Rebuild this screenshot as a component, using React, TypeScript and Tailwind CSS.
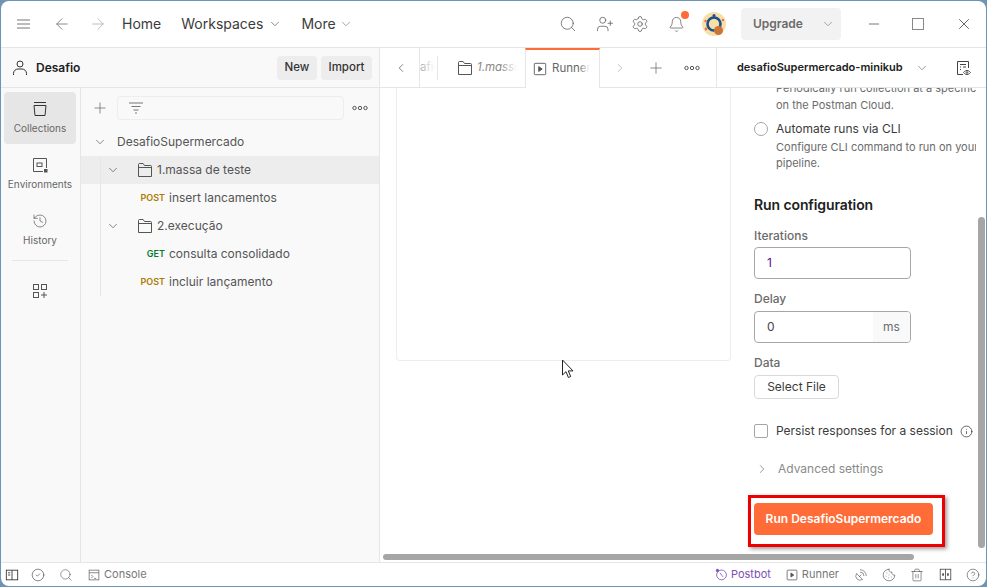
import React from "react";
import { Search, UserPlus, Settings, Bell, ChevronDown, ChevronRight, ChevronLeft, Plus, ArrowLeft, ArrowRight, X, Minus, Info, History, CircleCheck, Trash2, Cookie, CircleHelp, SatelliteDish } from "lucide-react";

const font = { fontFamily: "Inter, 'Liberation Sans', sans-serif" };

function Svg({ size = 16, children, className = "" }: { size?: number; children: React.ReactNode; className?: string }) {
  return (
    <svg width={size} height={size} viewBox="0 0 16 16" fill="none" stroke="currentColor" strokeWidth="1" className={"shrink-0 " + className}>
      {children}
    </svg>
  );
}

const Dots = ({ className = "" }: { className?: string }) => (
  <svg width="16" height="16" viewBox="0 0 16 16" fill="none" stroke="#555" strokeWidth="1" className={"shrink-0 " + className}>
    <circle cx="2.500" cy="8" r="1.700" />
    <circle cx="8" cy="8" r="1.700" />
    <circle cx="13.500" cy="8" r="1.700" />
  </svg>
);

const Folder = () => (
  <Svg size={16} className="text-[#555]">
    <path d="M1.500 14.500v-12a1 1 0 0 1 1-1h3.600l1.400 2h6a1 1 0 0 1 1 1v10z" />
    <path d="M1.500 5.500h13" />
  </Svg>
);

const Play = ({ size = 14 }: { size?: number }) => (
  <Svg size={size} className="text-[#555]">
    <rect x="1.500" y="1.500" width="13" height="13" rx="1" />
    <path d="M6.500 5.200v5.600L10.500 8z" fill="currentColor" />
  </Svg>
);

function Row({ children, active = false }: { children: React.ReactNode; active?: boolean }) {
  return <div className={"h-7 flex items-center text-xs text-[#555] " + (active ? "bg-[#ededed]" : "")}>{children}</div>;
}

function Req({ m, name }: { m: string; name: string }) {
  return (
    <Row>
      <span className={"w-[84px] text-right text-[9px] font-semibold " + (m === "GET" ? "text-[#007f31]" : "text-[#ad7a03]")}>{m}</span>
      <span className="ml-[4px]">{name}</span>
    </Row>
  );
}

function RailItem({ icon, label, active = false }: { icon: React.ReactNode; label: string; active?: boolean }) {
  return (
    <div className={"w-[72px] h-[52px] rounded flex flex-col items-center justify-center gap-[5px] pb-px text-[#666] " + (active ? "bg-[#e6e6e6]" : "")}>
      {icon}
      <span className="text-[10px] leading-3">{label}</span>
    </div>
  );
}

export default function App() {
  return (
    <div style={font} className="w-[987px] h-[587px] bg-[#6d94b3] p-px overflow-hidden">
      <div className="relative w-full h-full bg-white rounded-lg overflow-hidden flex flex-col">
        {/* Title bar */}
        <header className="h-[46px] shrink-0 border-b border-[#e6e6e6] flex items-center text-[#3b3b3b] box-content">
          <svg width="13" height="10" viewBox="0 0 13 10" stroke="#777" strokeWidth="1" className="ml-[16px] shrink-0">
            <path d="M0 1h13M0 5h13M0 9h13" />
          </svg>
          <ArrowLeft size={18} strokeWidth={1} className="ml-[23px] text-[#666]" />
          <ArrowRight size={18} strokeWidth={1} className="ml-[18px] text-[#aaa]" />
          <span className="ml-[15px] text-sm">Home</span>
          <span className="ml-[20px] text-sm">Workspaces</span>
          <ChevronDown size={14} strokeWidth={1} className="ml-[5px]" />
          <span className="ml-[19px] text-sm">More</span>
          <ChevronDown size={14} strokeWidth={1} className="ml-[3px] text-[#666]" />
          <div className="flex-1" />
          <Search size={18} strokeWidth={1} className="text-[#555]" />
          <UserPlus size={18} strokeWidth={1} className="ml-[19px] text-[#555]" />
          <Settings size={18} strokeWidth={1} className="ml-[17px] text-[#555]" />
          <div className="relative ml-[19px]">
            <Bell size={17} strokeWidth={1} className="text-[#555]" />
            <span className="absolute -top-[5px] right-[-4px] w-2 h-2 rounded-full bg-[#ff6c37]" />
          </div>
          <svg width="24" height="24" viewBox="0 0 24 24" className="ml-[17px] shrink-0">
            <circle cx="12" cy="12" r="12" fill="#f7e0a6" />
            <circle cx="12" cy="12" r="6.500" fill="none" stroke="#1b4f8f" strokeWidth="2.600" />
            <circle cx="12" cy="3.500" r="1.500" fill="#1b4f8f" />
            <circle cx="16.500" cy="18.500" r="4.500" fill="#c9743a" />
            <circle cx="3.500" cy="9" r="1.200" fill="#ef6b4a" />
            <circle cx="21" cy="8" r="1.200" fill="#ef6b4a" />
            <circle cx="4" cy="17" r="1.400" fill="#ef6b4a" />
          </svg>
          <div className="ml-[15px] w-[100px] h-8 shrink-0 rounded bg-[#f2f2f2] flex items-center pl-3 text-xs font-semibold text-[#6b6b6b]">
            <span>Upgrade</span>
            <ChevronDown size={14} strokeWidth={1} className="ml-[18px]" />
          </div>
          <Minus size={16} strokeWidth={1} className="ml-[25px] text-[#333]" />
          <div className="ml-[30px] w-3 h-3 border border-[#888]" />
          <X size={18} strokeWidth={1} className="ml-[31px] mr-[13px] text-[#333]" />
        </header>

        <div className="flex-1 flex min-h-0">
          {/* Sidebar */}
          <aside className="w-[378px] shrink-0 border-r border-[#e6e6e6] bg-[#f9f9f9] box-content flex flex-col">
            <div className="h-[39px] shrink-0 border-b border-[#e6e6e6] box-content flex items-center pl-[10px] pr-[7px]">
              <svg width="18" height="18" viewBox="0 0 18 18" fill="none" stroke="#333" strokeWidth="1">
                <circle cx="9" cy="5" r="3" />
                <path d="M2.500 16v-1.500a4.500 4.500 0 0 1 4.500-4.500h4a4.500 4.500 0 0 1 4.500 4.500V16" />
              </svg>
              <span className="ml-[7px] text-xs font-semibold text-[#212121]">Desafio</span>
              <div className="flex-1" />
              <div className="w-10 h-6 rounded bg-[#ededed] flex items-center justify-center text-[11.5px] font-medium text-[#333]">New</div>
              <div className="ml-1 w-[51px] h-6 rounded bg-[#ededed] flex items-center justify-center text-[11.5px] font-medium text-[#333]">Import</div>
            </div>
            <div className="flex-1 flex min-h-0">
              <nav className="w-[76px] shrink-0 border-r border-[#e6e6e6] box-content flex flex-col items-start pl-[3px] pt-1">
                <RailItem
                  active
                  label="Collections"
                  icon={
                    <Svg size={16} className="text-[#333]">
                      <path d="M2 1.500h12M2 4.500h12l-1 10H3z" />
                    </Svg>
                  }
                />
                <div className="h-1" />
                <RailItem
                  label="Environments"
                  icon={
                    <Svg size={16} className="text-[#555]">
                      <path d="M11 14.500H1.500v-13h13V11" />
                      <rect x="5" y="6" width="5" height="3.500" />
                      <rect x="12.500" y="12.500" width="2.500" height="2.500" fill="currentColor" />
                    </Svg>
                  }
                />
                <div className="h-1" />
                <RailItem label="History" icon={<History size={16} strokeWidth={1} className="text-[#555]" />} />
                <div className="ml-[8px] mt-[4px] w-14 border-t border-[#e6e6e6]" />
                <div className="ml-[28px] mt-[22px]">
                  <Svg size={16} className="text-[#555]">
                    <rect x="1.500" y="1.500" width="5" height="5" />
                    <rect x="9.500" y="1.500" width="5" height="5" />
                    <rect x="1.500" y="9.500" width="5" height="5" />
                    <path d="M12 9v6M9 12h6" />
                  </Svg>
                </div>
              </nav>
              <div className="flex-1 flex flex-col">
                <div className="h-[40px] shrink-0 flex items-center pl-[12px]">
                  <Plus size={14} strokeWidth={1} className="text-[#666] scale-125" />
                  <div className="ml-[10px] w-[227px] h-6 border border-[#ededed] rounded-sm flex items-center pl-[11px]">
                    <svg width="14" height="12" viewBox="0 0 14 12" stroke="#777" strokeWidth="1">
                      <path d="M0 1h14M2.500 4.500h9M4.500 8h5M6 11h2" />
                    </svg>
                  </div>
                  <Dots className="ml-[8px]" />
                </div>
                <div className="relative">
                  <Row>
                    <ChevronDown size={14} strokeWidth={1} className="ml-[12px] text-[#333]" />
                    <span className="ml-[10px]">DesafioSupermercado</span>
                  </Row>
                  <Row active>
                    <ChevronDown size={14} strokeWidth={1} className="ml-[25px] text-[#333]" />
                    <span className="ml-[17px]"><Folder /></span>
                    <span className="ml-[4px]">1.massa de teste</span>
                  </Row>
                  <Req m="POST" name="insert lancamentos" />
                  <Row>
                    <ChevronDown size={14} strokeWidth={1} className="ml-[25px] text-[#333]" />
                    <span className="ml-[17px]"><Folder /></span>
                    <span className="ml-[4px]">2.execução</span>
                  </Row>
                  <Req m="GET" name="consulta consolidado" />
                  <Req m="POST" name="incluir lançamento" />
                  <span className="absolute left-[19px] top-[28px] bottom-0 w-px bg-[#e6e6e6]" />
                </div>
              </div>
            </div>
          </aside>

          {/* Main */}
          <main className="relative flex-1 min-w-0 flex flex-col bg-white">
            <div className="h-[39px] shrink-0 border-b border-[#e6e6e6] box-content flex items-center">
              <div className="relative w-[40px] h-full flex items-center border-r border-[#e6e6e6] shrink-0">
                <ChevronLeft size={14} strokeWidth={1.25} className="ml-[14px] text-[#555]" />
              </div>
              <div className="relative w-[105px] h-full shrink-0 flex items-center pl-[37px] overflow-hidden">
                <span className="absolute left-0 w-[15px] overflow-hidden text-[11.5px] text-[#aaa] whitespace-nowrap">
                  afic
                  <span className="absolute inset-0 bg-linear-to-r from-transparent to-white" />
                </span>
                <span className="absolute left-[17px] h-6 border-l border-[#e6e6e6]" />
                <Folder />
                <span className="relative ml-[4px] w-[40px] overflow-hidden text-[11.5px] italic text-[#888] whitespace-nowrap">
                  1.massa
                  <span className="absolute right-0 inset-y-0 w-4 bg-linear-to-r from-transparent to-white" />
                </span>
              </div>
              <div className="relative z-10 w-[75px] h-10 -mb-px shrink-0 bg-white border-x border-[#e6e6e6] border-t-2 border-t-[#ff6c37] flex items-center pl-[7px] self-start">
                <Play />
                <span className="relative ml-[5px] w-[38px] overflow-hidden text-[11.5px] text-[#666] whitespace-nowrap">
                  Runner
                  <span className="absolute right-0 inset-y-0 w-3 bg-linear-to-r from-transparent to-white" />
                </span>
              </div>
              <ChevronRight size={14} strokeWidth={1.25} className="ml-[13px] text-[#aaa]" />
              <Plus size={18} strokeWidth={1} className="ml-[20px] text-[#666]" />
              <Dots className="ml-[19px]" />
              <div className="ml-[16px] h-full w-[270px] border-l border-[#e6e6e6] flex items-center pl-[20px] text-[#212121]">
                <span className="text-[11px] font-semibold whitespace-nowrap">desafioSupermercado-minikub</span>
                <ChevronDown size={14} strokeWidth={1} className="ml-[12px] text-[#555]" />
                <Svg size={16} className="ml-[26px] text-[#444]">
                  <path d="M8 14.500H2.500v-13h11V8" />
                  <path d="M5 4.500h6M5 7h1M8 7h3M5 9.500h1" />
                  <path d="M8.500 12.500s1.500-2 3.500-2 3.500 2 3.500 2-1.500 2-3.500 2-3.500-2-3.500-2z" />
                  <circle cx="12" cy="12.500" r=".8" />
                </Svg>
              </div>
            </div>

            <div className="flex-1 min-h-0 flex overflow-hidden pl-4">
              <div className="w-[335px] h-[273px] shrink-0 border-x border-b border-[#ededed] rounded-b" />
              <div className="w-[245px] pl-[23px] -mt-[8px] overflow-hidden whitespace-nowrap shrink-0 text-xs">
                <div className="pl-[22px] text-[11px] leading-[17px] text-[#6b6b6b]">
                  <div>Periodically run collection at a specific time</div>
                  <div>on the Postman Cloud.</div>
                </div>
                <div className="mt-[7px] flex items-center h-4">
                  <span className="w-[14px] h-[14px] rounded-full border border-[#a6a6a6]" />
                  <span className="ml-2 text-[#3b3b3b]">Automate runs via CLI</span>
                </div>
                <div className="mt-[2px] pl-[22px] text-[11px] leading-4 text-[#6b6b6b]">
                  <div>Configure CLI command to run on your CI/CD</div>
                  <div>pipeline.</div>
                </div>
                <div className="mt-[24px] text-sm leading-5 font-semibold text-[#212121] -tracking-[0.1px]">Run configuration</div>
                <div className="mt-[13px] text-xs leading-4 font-medium text-[#6b6b6b]">Iterations</div>
                <div className="mt-[3px] w-[157px] h-8 border border-[#a6a6a6] rounded flex items-center pl-3 text-[#5b0e96]">1</div>
                <div className="mt-[12px] text-xs leading-4 font-medium text-[#6b6b6b]">Delay</div>
                <div className="mt-[4px] w-[157px] h-8 border border-[#a6a6a6] rounded overflow-hidden flex items-center pl-3 text-[#444]">
                  <span className="flex-1">0</span>
                  <span className="w-[37px] h-full bg-[#f9f9f9] flex items-center justify-center text-[#6b6b6b]">ms</span>
                </div>
                <div className="mt-[12px] text-xs leading-4 font-medium text-[#6b6b6b]">Data</div>
                <div className="mt-[4px] w-[85px] h-6 border border-[#d9d9d9] rounded flex items-center justify-center text-[#3b3b3b]">Select File</div>
                <div className="mt-[24px] h-4 flex items-center">
                  <span className="w-[14px] h-[14px] rounded-[2px] border border-[#a6a6a6]" />
                  <span className="ml-2 text-[#3b3b3b]">Persist responses for a session</span>
                  <Info size={13} strokeWidth={1.25} className="ml-[7px] text-[#222]" />
                </div>
                <div className="mt-[22px] h-4 flex items-center text-[#8a8a8a]">
                  <ChevronRight size={14} strokeWidth={1} className="text-[#555] ml-px" />
                  <span className="ml-[9px]">Advanced settings</span>
                </div>
                <div className="mt-[26px] w-[179px] h-8 rounded bg-[#ff6c37] flex items-center justify-center text-xs font-semibold text-white">
                  Run DesafioSupermercado
                </div>
              </div>
            </div>

            {/* Red annotation */}
            <div className="absolute left-[368px] top-[447px] w-[197px] h-[52px] border-[3px] border-[#ee0000] shadow-[2px_2px_4px_rgba(0,0,0,0.4)]" />
            {/* Scrollbars */}
            <div className="absolute left-[598px] top-[169px] w-[7px] h-[331px] rounded-full bg-[#a6a6a6]" />
            <div className="absolute left-[3px] top-[506px] w-[531px] h-[6px] rounded-full bg-[#a6a6a6]" />
            {/* Cursor */}
            <svg width="14" height="20" viewBox="0 0 14 20" className="absolute left-[181px] top-[311px]">
              <path d="M1.500 1v15l3.500-3.300 2.400 5.800 2.300-1-2.400-5.600h4.700z" fill="#fff" stroke="#222" strokeWidth="1" />
            </svg>
          </main>
        </div>

        {/* Status bar */}
        <footer className="h-[23px] shrink-0 border-t border-[#e6e6e6] box-content flex items-center text-[#777] text-[11px]">
          <Svg size={14} className="ml-[4px] text-[#333]">
            <rect x="1.500" y="2.500" width="13" height="11" />
            <path d="M8 2.500v11M3.500 5.500h2.500M3.500 8h2.500" />
          </Svg>
          <CircleCheck size={14} strokeWidth={1} className="ml-[12px] text-[#333]" />
          <Search size={14} strokeWidth={1} className="ml-[14px] text-[#555]" />
          <Svg size={12} className="ml-[15px] text-[#666]">
            <rect x="1.500" y="1.500" width="13" height="13" />
            <path d="M1.500 5h13M4.500 8l2 2-2 2M8 12.500h3" />
          </Svg>
          <span className="ml-[4px]">Console</span>
          <div className="flex-1" />
          <Svg size={13} className="text-[#7d4fb3]">
            <circle cx="8" cy="8.500" r="6" />
            <path d="M6 6l4 5" />
            <circle cx="3" cy="3" r="1.500" fill="currentColor" />
          </Svg>
          <span className="ml-[3px] text-[#7d4fb3]">Postbot</span>
          <span className="ml-[15px]"><Play size={12} /></span>
          <span className="ml-[4px]">Runner</span>
          <SatelliteDish size={14} strokeWidth={1} className="ml-[15px] text-[#444]" />
          <Cookie size={14} strokeWidth={1} className="ml-[14px] text-[#444]" />
          <Trash2 size={14} strokeWidth={1} className="ml-[14px] text-[#444]" />
          <Svg size={13} className="ml-[15px] text-[#444]">
            <rect x="1.500" y="1.500" width="13" height="13" />
            <path d="M8 1.500v13" />
            <rect x="4" y="6.500" width="2" height="3" fill="currentColor" stroke="none" />
            <rect x="10" y="6.500" width="2" height="3" fill="currentColor" stroke="none" />
          </Svg>
          <CircleHelp size={14} strokeWidth={1} className="ml-[14px] mr-[6px] text-[#444]" />
        </footer>
      </div>
    </div>
  );
}
